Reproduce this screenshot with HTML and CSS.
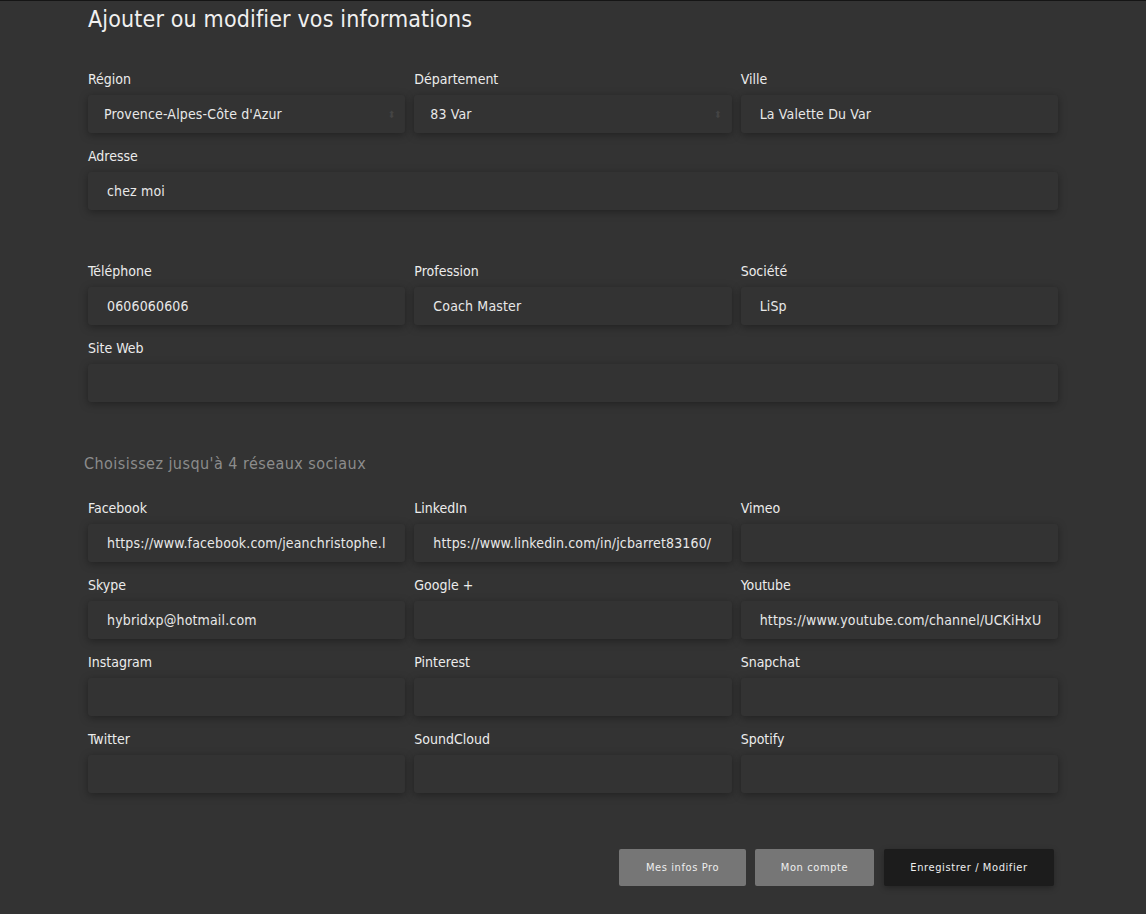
FILE: index.html
```html
<!DOCTYPE html>
<html lang="fr">
<head>
<meta charset="utf-8">
<title>Ajouter ou modifier vos informations</title>
<link rel="stylesheet" href="styles.css">
</head>
<body>
<div class="page">
  <h1 class="title">Ajouter ou modifier vos informations</h1>

  <div class="grid group">
    <div class="field">
      <label class="label">Région</label>
      <div class="input select"><span>Provence-Alpes-Côte d'Azur</span><span class="arrows">⬍</span></div>
    </div>
    <div class="field">
      <label class="label">Département</label>
      <div class="input select"><span>83 Var</span><span class="arrows">⬍</span></div>
    </div>
    <div class="field">
      <label class="label">Ville</label>
      <div class="input">La Valette Du Var</div>
    </div>
    <div class="field full">
      <label class="label">Adresse</label>
      <div class="input">chez moi</div>
    </div>
  </div>

  <div class="grid group">
    <div class="field">
      <label class="label">Téléphone</label>
      <div class="input">0606060606</div>
    </div>
    <div class="field">
      <label class="label">Profession</label>
      <div class="input">Coach Master</div>
    </div>
    <div class="field">
      <label class="label">Société</label>
      <div class="input">LiSp</div>
    </div>
    <div class="field full">
      <label class="label">Site Web</label>
      <div class="input"></div>
    </div>
  </div>

  <h2 class="subtitle">Choisissez jusqu'à 4 réseaux sociaux</h2>

  <div class="grid">
    <div class="field"><label class="label">Facebook</label><div class="input">https://www.facebook.com/jeanchristophe.l</div></div>
    <div class="field"><label class="label">LinkedIn</label><div class="input">https://www.linkedin.com/in/jcbarret83160/</div></div>
    <div class="field"><label class="label">Vimeo</label><div class="input"></div></div>
    <div class="field"><label class="label">Skype</label><div class="input">hybridxp@hotmail.com</div></div>
    <div class="field"><label class="label">Google +</label><div class="input"></div></div>
    <div class="field"><label class="label">Youtube</label><div class="input">https://www.youtube.com/channel/UCKiHxU</div></div>
    <div class="field"><label class="label">Instagram</label><div class="input"></div></div>
    <div class="field"><label class="label">Pinterest</label><div class="input"></div></div>
    <div class="field"><label class="label">Snapchat</label><div class="input"></div></div>
    <div class="field"><label class="label">Twitter</label><div class="input"></div></div>
    <div class="field"><label class="label">SoundCloud</label><div class="input"></div></div>
    <div class="field"><label class="label">Spotify</label><div class="input"></div></div>
  </div>

  <div class="actions">
    <button class="btn btn-grey btn-pro">Mes infos Pro</button>
    <button class="btn btn-grey btn-account">Mon compte</button>
    <button class="btn btn-dark btn-save">Enregistrer / Modifier</button>
  </div>
</div>
</body>
</html>
```

FILE: styles.css
```css
html, body {
  margin: 0;
  padding: 0;
  background: #333333;
}
body {
  border-top: 1px solid #151515;
  font-family: "Liberation Sans Narrow", "DejaVu Sans Condensed", "Liberation Sans", sans-serif;
  color: #e6e6e6;
  min-height: 913px;
}
.page {
  width: 970px;
  margin-left: 88px;
}
.title {
  margin: 0;
  padding-top: 4px;
  font-size: 23px;
  line-height: 28px;
  font-weight: normal;
  letter-spacing: 0.15px;
  color: #f0f0f0;
}
.grid {
  display: grid;
  grid-template-columns: repeat(3, minmax(0, 1fr));
  column-gap: 9px;
  row-gap: 14px;
  margin-top: 37px;
}
.group + .group {
  margin-top: 52px;
}
.field {
  min-width: 0;
}
.field.full {
  grid-column: 1 / -1;
}
.label {
  display: block;
  font-size: 14px;
  line-height: 18px;
  letter-spacing: 0;
  color: #ececec;
  margin-bottom: 7px;
}
.input {
  height: 38px;
  box-sizing: border-box;
  background: #333333;
  border-radius: 3px;
  box-shadow: 0 2px 9px rgba(0, 0, 0, 0.35);
  padding: 0 19px;
  display: flex;
  align-items: center;
  font-size: 14px;
  letter-spacing: 0.15px;
  color: #e8e8e8;
  white-space: nowrap;
  overflow: hidden;
}
.select {
  padding-left: 16px;
  padding-right: 10px;
  justify-content: space-between;
}
.arrows {
  font-size: 10px;
  color: #444;
}
.subtitle {
  margin: 52px 0 0 -4px;
  font-size: 16px;
  line-height: 20px;
  font-weight: normal;
  letter-spacing: 0.45px;
  color: #8c8c8c;
}
.subtitle + .grid {
  margin-top: 25px;
}
.actions {
  display: flex;
  justify-content: flex-end;
  gap: 9px;
  margin-top: 56px;
  padding-right: 4px;
}
.btn {
  height: 37px;
  border: none;
  border-radius: 2px;
  font-family: inherit;
  font-size: 11px;
  letter-spacing: 0.6px;
  color: #eeeeee;
  cursor: pointer;
}
.btn-grey {
  background: #767676;
}
.btn-dark {
  background: #1c1c1c;
  box-shadow: 0 2px 6px rgba(0, 0, 0, 0.3);
  margin-left: 1px;
}
.btn-pro { width: 127px; }
.btn-account { width: 119px; }
.btn-save { width: 170px; }
```
